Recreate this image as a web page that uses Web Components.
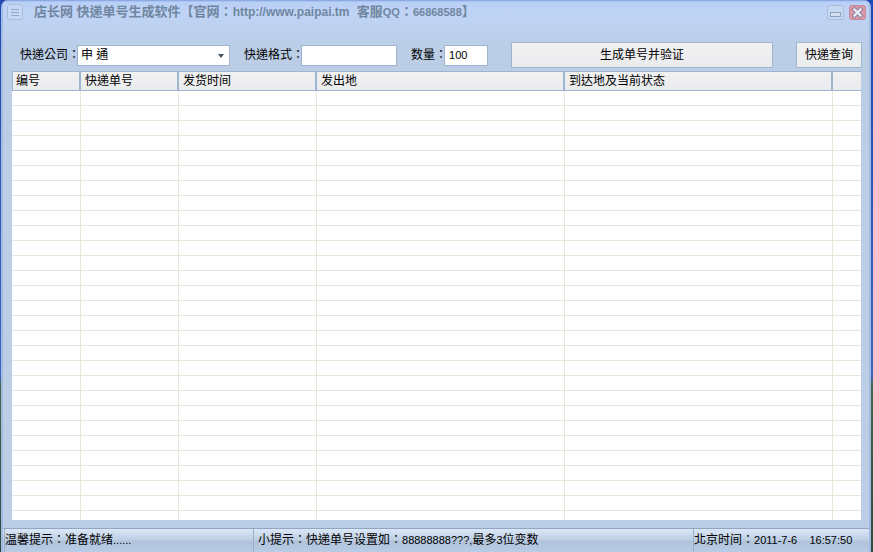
<!DOCTYPE html>
<html lang="zh">
<head>
<meta charset="utf-8">
<title>店长网 快递单号生成软件</title>
<style>
  html, body { height: 100%; }
  body { margin: 0; background: #2c50a4; font: 12px/16px "Liberation Sans", "Noto Sans CJK TC", sans-serif; font-feature-settings: "locl" 0; color: #000; }
  .url { font-size: 12px; }
  .latin { font-size: 11px; }
</style>
</head>
<body>
<app-window>
  <title-bar slot="title">店长网 快递单号生成软件【官网：<span class="url">http://www.paipai.tm</span>&nbsp; 客服<span class="latin">QQ</span>：<span class="latin">66868588</span>】</title-bar>
  <query-form></query-form>
  <order-grid></order-grid>
  <status-bar slot="status">
    <span slot="state">温馨提示：准备就绪<span class="latin">......</span></span>
    <span slot="hint">小提示：快递单号设置如：<span class="latin">88888888???,</span>最多<span class="latin">3</span>位变数</span>
    <span slot="clock">北京时间：<span class="latin">2011-7-6 &nbsp;&nbsp; 16:57:50</span></span>
  </status-bar>
</app-window>

<script>
  function define(name, html, setup) {
    const template = document.createElement('template');
    template.innerHTML = html;
    customElements.define(name, class extends HTMLElement {
      constructor() {
        super();
        this.attachShadow({ mode: 'open' });
        this.shadowRoot.appendChild(template.content.cloneNode(true));
        if (setup) setup(this.shadowRoot);
      }
    });
  }

  // Outer frame: title on top, content in the middle, status bar at the bottom.
  define('app-window', `
    <style>
      :host { display: block; height: 100%; padding: 0 2px 0 1px; box-sizing: border-box; background: linear-gradient(#2149b4, #3c67b8 68%, #41674f 70%, #2d4a3e); }
      .frame { display: flex; flex-direction: column; box-sizing: border-box; height: 100%; border: solid #a3bbe2; border-width: 0 2px; background: linear-gradient(#7d9fe0 0, #b9cff6 2px, #bfd3f6 12px, #bbcee6 50px, #bbcee6 100%); border-radius: 7px 7px 0 0; }
      .content { flex: 1; display: flex; flex-direction: column; min-height: 0; padding: 0 7px 8px 9px; }
    </style>
    <div class="frame">
      <slot name="title"></slot>
      <div class="content"><slot></slot></div>
      <slot name="status"></slot>
    </div>
  `);

  define('title-bar', `
    <style>
      :host { display: block; }
      header { display: flex; align-items: center; height: 24px; padding: 0 3px 0 4px; color: #6f869f; }
      h1 { flex: 1; margin: 0 0 0 10px; font-size: 13px; line-height: 24px; white-space: pre; }
      button { width: 17px; height: 16px; padding: 0; border: 0; background: none; }
      .min { margin-right: 5px; }
      svg { display: block; }
    </style>
    <header>
      <button class="menu" type="button" aria-label="菜单">
        <svg width="16" height="16" viewBox="0 0 16 16" fill="none"><rect x=".5" y=".5" width="15" height="15" rx="2.5" fill="#c5d7f3" stroke="#a9bddb"/><path d="M4 5.5h8M4 8.5h8M4 11.5h8" stroke="#94aac9"/></svg>
      </button>
      <h1><slot></slot></h1>
      <button class="min" type="button" aria-label="最小化">
        <svg width="17" height="16" viewBox="0 0 17 16" fill="none"><rect x=".5" y="1.5" width="16" height="14" rx="2.5" fill="#c6d8f0" stroke="#a9bddb"/><rect x="3.5" y="8.5" width="10" height="4" fill="#d3e0f2" stroke="#8ba2c0"/></svg>
      </button>
      <button class="close" type="button" aria-label="关闭">
        <svg width="17" height="16" viewBox="0 0 17 16" fill="none"><rect x=".5" y="1.5" width="16" height="14" rx="2.5" fill="#d999a8" stroke="#c98797"/><path d="M5.5 5.5l6 6M11.5 5.5l-6 6" stroke="#90809b" stroke-width="4.4" stroke-linecap="square"/><path d="M5.5 5.5l6 6M11.5 5.5l-6 6" stroke="#e6ebf5" stroke-width="2.4" stroke-linecap="square"/></svg>
      </button>
    </header>
  `);

  define('query-form', `
    <style>
      :host { display: block; }
      form { display: flex; align-items: center; gap: 14px; margin: 18px 0 3px; padding-left: 8px; }
      .field { display: flex; align-items: center; white-space: nowrap; }
      .field label { margin-right: -3px; }
      input, select, button { box-sizing: border-box; font: inherit; color: inherit; margin: 0; border: 1px solid #9db5d0; border-radius: 0; }
      input, select { height: 21px; padding: 0 4px; background: #fff; }
      input { font-size: 11px; }
      .pick { position: relative; }
      select { width: 153px; padding: 0 3px; appearance: none; display: block; }
      .pick svg { position: absolute; right: 6px; top: 9px; pointer-events: none; }
      .format { width: 96px; }
      .count { width: 44px; }
      button { height: 26px; padding: 0 8px; border-radius: 1px; background: linear-gradient(#f1f1f2, #eaebed); white-space: nowrap; }
      .make { flex: 1; margin: 0 9px; }
    </style>
    <form>
      <div class="field">
        <label for="company">快递公司：</label>
        <div class="pick">
          <select id="company"><option>申 通</option></select>
          <svg width="6" height="4" viewBox="0 0 6 4"><path d="M0 0h6L3 4z" fill="#44525f"/></svg>
        </div>
      </div>
      <div class="field">
        <label for="format">快递格式：</label>
        <input class="format" id="format" type="text">
      </div>
      <div class="field">
        <label for="count">数量：</label>
        <input class="count" id="count" type="text" value="100">
      </div>
      <button class="make" type="button">生成单号并验证</button>
      <button type="button">快递查询</button>
    </form>
  `);

  define('order-grid', `
    <style>
      :host { display: block; flex: 1; min-height: 0; overflow: hidden; background: #fff; margin-right: 1px; }
      table { width: 100%; table-layout: fixed; border-collapse: separate; border-spacing: 0; }
      th, td { box-sizing: border-box; padding: 0; }
      th { height: 20px; padding-left: 4px; text-align: left; font-weight: normal; line-height: 16px; white-space: nowrap; background: linear-gradient(#f1f1f2, #eaebed); border: 1px solid #9db5d0; border-left-width: 0; border-right-width: 2px; }
      th:first-child { border-left-width: 1px; padding-left: 3px; }
      th:last-child { border-right: 0; }
      td { height: 15px; border-right: 1px solid #e6e7d8; border-bottom: 1px solid #e6e7d8; }
      td:last-child { border-right: 0; }
      .c1 { width: 69px; } .c2 { width: 98px; } .c3 { width: 138px; } .c4 { width: 248px; } .c6 { width: 28px; }
    </style>
    <table>
      <colgroup><col class="c1"><col class="c2"><col class="c3"><col class="c4"><col><col class="c6"></colgroup>
      <thead><tr><th>编号</th><th>快递单号</th><th>发货时间</th><th>发出地</th><th>到达地及当前状态</th><th></th></tr></thead>
      <tbody></tbody>
    </table>
  `, root => {
    // empty rows fill the list, the host clips what is left over
    root.querySelector('tbody').innerHTML = ('<tr>' + '<td></td>'.repeat(6) + '</tr>').repeat(29);
  });

  define('status-bar', `
    <style>
      :host { display: block; }
      footer { display: flex; height: 23px; padding-left: 1px; border-top: 1px solid #8fa5c2; background: linear-gradient(#dbe7f6, #bfd0e4 45%, #b0c3db 55%, #b9cce6); }
      div { box-sizing: border-box; padding-top: 3px; white-space: pre; border-left: 1px solid #9aaec8; }
      .state { width: 249px; }
      .hint { flex: 1; padding-left: 4px; }
      .clock { width: 176px; }
    </style>
    <footer><div class="state"><slot name="state"></slot></div><div class="hint"><slot name="hint"></slot></div><div class="clock"><slot name="clock"></slot></div></footer>
  `);
</script>
</body>
</html>
